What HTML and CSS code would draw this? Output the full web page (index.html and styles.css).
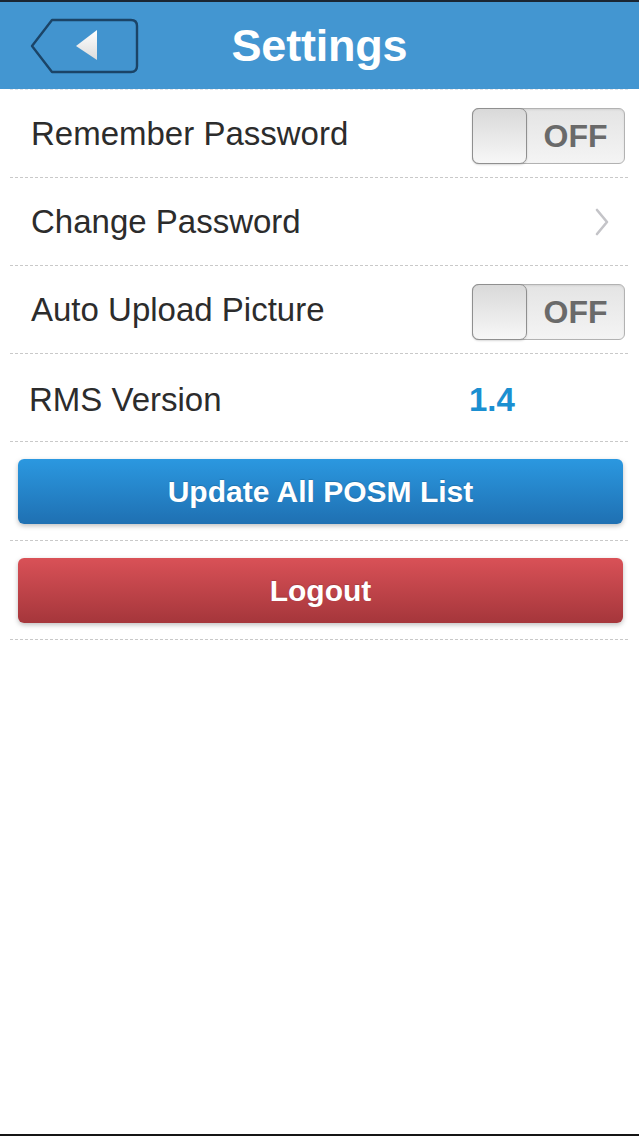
FILE: index.html
```html
<!DOCTYPE html>
<html lang="en">
<head>
    <meta charset="UTF-8">
    <meta name="viewport" content="width=device-width, initial-scale=1.0">
    <title>Settings</title>
    <link rel="stylesheet" href="styles.css">
</head>
<body>
<div class="screen">
    <header class="nav-bar">
        <div class="back-button">
            <svg width="110" height="58" viewBox="0 0 110 58">
                <defs>
                    <linearGradient id="arrowFill" x1="0" y1="0" x2="0" y2="1">
                        <stop offset="0" stop-color="#ffffff"/>
                        <stop offset="1" stop-color="#dcdcdc"/>
                    </linearGradient>
                </defs>
                <path d="M22 2 H101 Q107 2 107 8 V48 Q107 54 101 54 H22 L2 28 Z" fill="#4294cf" stroke="#1b4467" stroke-width="2.4" stroke-linejoin="round"/>
                <path d="M46 28 L67 12 V42 Z" fill="url(#arrowFill)"/>
            </svg>
        </div>
        <h1>Settings</h1>
        <div></div>
    </header>

    <div class="settings-list">
        <div class="row">
            <span class="label">Remember Password</span>
            <div class="toggle">
                <div class="knob"></div>
                <span>OFF</span>
            </div>
        </div>
        <div class="row">
            <span class="label">Change Password</span>
            <svg class="chevron" width="16" height="28" viewBox="0 0 16 28">
                <path d="M3 2 L13 14 L3 26" fill="none" stroke="#c4c4c8" stroke-width="2.6" stroke-linecap="round" stroke-linejoin="round"/>
            </svg>
        </div>
        <div class="row">
            <span class="label">Auto Upload Picture</span>
            <div class="toggle">
                <div class="knob"></div>
                <span>OFF</span>
            </div>
        </div>
        <div class="row">
            <span class="label version-label">RMS Version</span>
            <span class="version">1.4</span>
        </div>
    </div>

    <div class="button-row">
        <button class="action-button update">Update All POSM List</button>
    </div>
    <div class="button-row">
        <button class="action-button logout">Logout</button>
    </div>
</div>
</body>
</html>
```

FILE: styles.css
```css
body {
    font-family: "Liberation Sans", Arial, sans-serif;
    margin: 0;
    padding: 0;
    background-color: #fff;
}
.screen {
    min-height: 100vh;
    box-sizing: border-box;
    border-bottom: 2px solid #151515;
    display: flex;
    flex-direction: column;
}
.nav-bar {
    background-color: #4396d1;
    border-top: 2px solid #1a2633;
    height: 87px;
    display: grid;
    grid-template-columns: 1fr auto 1fr;
    align-items: center;
}
.back-button {
    padding-left: 30px;
    padding-top: 2px;
    display: flex;
    cursor: pointer;
}
.nav-bar h1 {
    margin: 0;
    color: #fff;
    font-size: 45px;
    font-weight: bold;
    letter-spacing: -0.2px;
}
.settings-list {
    margin: 0 11px 0 10px;
    border-top: 1px dashed #dfe3e8;
}
.row {
    height: 87px;
    display: flex;
    align-items: center;
    padding: 0 3px 0 21px;
    border-bottom: 1px dashed #c9c9c9;
}
.label {
    flex: 1;
    font-size: 33px;
    color: #2c2c2c;
}
.version-label {
    margin: 4px 0 0 -2px;
}
.version {
    width: 156px;
    margin-top: 4px;
    font-size: 33px;
    font-weight: bold;
    color: #1b8fd1;
}
.chevron {
    margin-right: 15px;
}
.toggle {
    width: 153px;
    height: 56px;
    margin-top: 5px;
    box-sizing: border-box;
    border: 1px solid #b2b2b2;
    border-radius: 6px;
    background: linear-gradient(#e4e4e4, #f4f4f4);
    display: flex;
    align-items: center;
    box-shadow: inset 0 1px 2px rgba(0,0,0,0.08);
}
.toggle .knob {
    width: 55px;
    height: 56px;
    margin: -1px 0 0 -1px;
    box-sizing: border-box;
    border: 1px solid #8f8f8f;
    border-radius: 7px;
    background: linear-gradient(#d9d9d9, #f7f7f7);
    box-shadow: 0 1px 2px rgba(0,0,0,0.15);
}
.toggle span {
    flex: 1;
    text-align: center;
    font-size: 32px;
    font-weight: bold;
    color: #6a6a6a;
}
.button-row {
    margin: 0 11px 0 10px;
    padding: 17px 0 16px 8px;
    border-bottom: 1px dashed #c9c9c9;
}
.action-button {
    display: block;
    width: 605px;
    height: 65px;
    border: none;
    border-radius: 6px;
    color: #fff;
    font-family: "Liberation Sans", Arial, sans-serif;
    font-size: 30px;
    font-weight: bold;
    cursor: pointer;
    text-shadow: 0 -1px 1px rgba(0,0,0,0.15);
    box-shadow: 0 2px 5px rgba(0,0,0,0.25);
}
.action-button.update {
    background: linear-gradient(#2b98e0, #1f70b2);
}
.action-button.logout {
    background: linear-gradient(#d95157, #a5363b);
}
```
